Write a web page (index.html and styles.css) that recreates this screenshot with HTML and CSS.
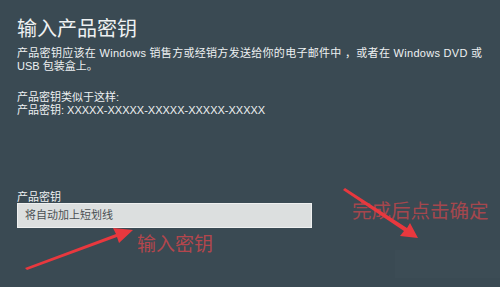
FILE: index.html
```html
<!DOCTYPE html>
<html lang="zh-CN">
<head>
<meta charset="utf-8">
<link rel="stylesheet" href="styles.css">
</head>
<body>
<div class="page">
  <h1 class="title">输入产品密钥</h1>
  <div class="desc">
    <div class="line wide">产品密钥应该在 Windows 销售方或经销方发送给你的电子邮件中 ，或者在 Windows DVD 或</div>
    <div class="line">USB 包装盒上。</div>
  </div>
  <div class="sample">
    <div class="line">产品密钥类似于这样:</div>
    <div class="line">产品密钥: XXXXX-XXXXX-XXXXX-XXXXX-XXXXX</div>
  </div>
  <div class="field">
    <label class="label">产品密钥</label>
    <div class="input">将自动加上短划线</div>
  </div>
  <div class="btn-ghost"></div>
</div>
<div class="note note-input">输入密钥</div>
<div class="note note-done">完成后点击确定</div>
<svg class="arrows" width="500" height="287" viewBox="0 0 500 287">
  <g fill="#e8383e">
    <path d="M25 268 L116 234 L113 228 L133 230 L119 243 L117 237 L27 270 Z"/>
    <path d="M343 190 L404 231 L400 236 L418 238 L410 223 L407 228 L345 188 Z"/>
  </g>
</svg>
</body>
</html>
```
FILE: styles.css
```css
html, body {
  margin: 0;
  padding: 0;
}
body {
  width: 500px;
  height: 287px;
  overflow: hidden;
  background: #3a4a53;
  font-family: "Liberation Sans", "Noto Sans CJK SC", sans-serif;
  color: #eef1f2;
  position: relative;
}
.page {
  padding: 14px 17px 0 17px;
  height: 287px;
  box-sizing: border-box;
  position: relative;
}
.title {
  margin: 0;
  font-family: "Noto Sans CJK SC", sans-serif;
  font-size: 20px;
  font-weight: 400;
  line-height: 28px;
  height: 28px;
}
.line {
  height: 13px;
  font-size: 11px;
  line-height: 13px;
  white-space: nowrap;
}
.wide {
  letter-spacing: 0.3px;
}
.desc {
  margin-top: 5px;
}
.sample {
  margin-top: 18px;
}
.field {
  margin-top: 73px;
  display: flex;
  flex-direction: column;
}
.label {
  height: 13px;
  font-size: 11px;
  line-height: 14px;
}
.input {
  box-sizing: border-box;
  width: 295px;
  height: 25px;
  background: #dcdfdf;
  border: 1px solid #eef0f0;
  color: #4a4f52;
  font-size: 11px;
  line-height: 23px;
  padding-left: 7px;
}
.btn-ghost {
  position: absolute;
  left: 395px;
  top: 250px;
  width: 105px;
  height: 28px;
  background: #3d4e58;
  opacity: 0.5;
}
.note {
  position: absolute;
  color: #c9464c;
  font-family: "Noto Sans CJK SC", sans-serif;
  font-weight: 400;
  white-space: nowrap;
}
.note-input {
  left: 137px;
  top: 230px;
  font-size: 19px;
  line-height: 26px;
  opacity: 0.85;
}
.note-done {
  left: 352px;
  top: 197px;
  font-size: 19.5px;
  line-height: 26px;
  opacity: 0.75;
}
.arrows {
  position: absolute;
  left: 0;
  top: 0;
}
```
